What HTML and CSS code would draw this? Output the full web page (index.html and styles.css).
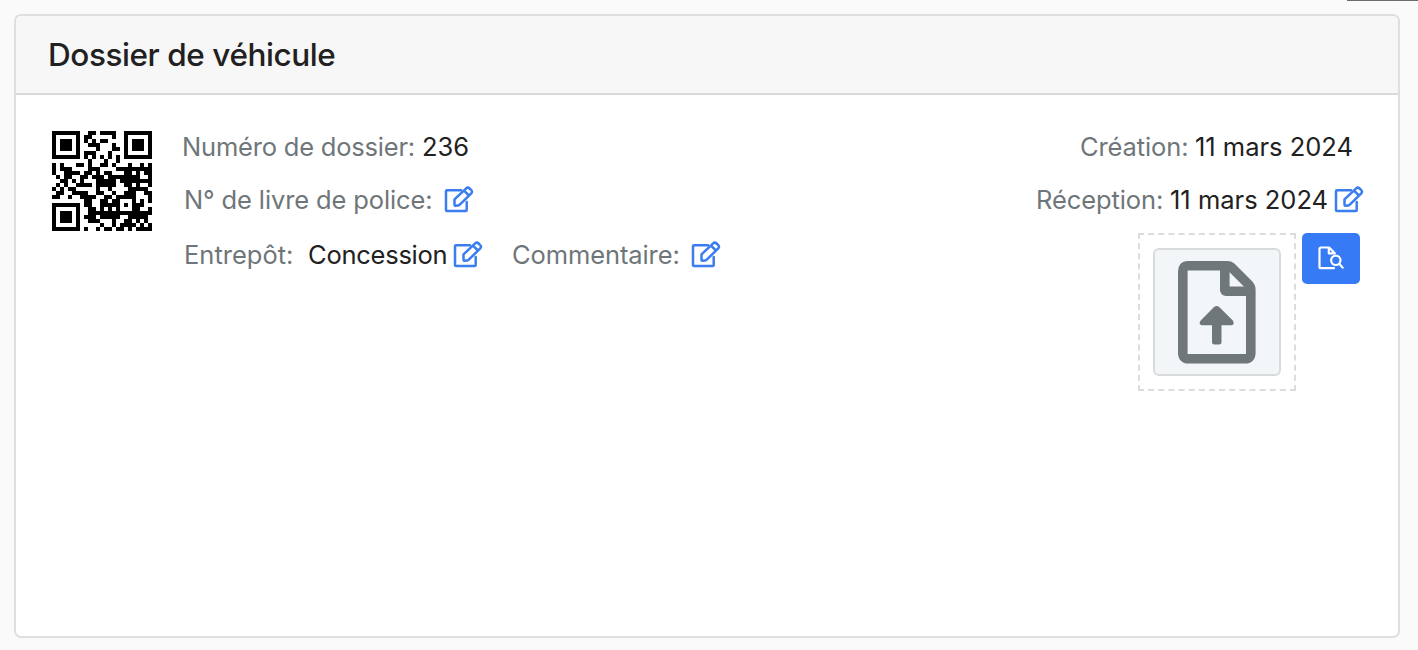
FILE: index.html
```html
<!DOCTYPE html>
<html lang="fr">
<head>
<meta charset="utf-8">
<title>Dossier de véhicule</title>
<link rel="stylesheet" href="styles.css">
</head>
<body>
<svg class="defs" aria-hidden="true">
  <symbol id="edit" viewBox="0 0 30 28">
    <g fill="none" stroke="currentColor" stroke-width="2.5" stroke-linejoin="round" stroke-linecap="round">
      <path d="M17 4.2H3Q2 4.2 2 5.2V24Q2 25 3 25H21.7Q22.7 25 22.7 24V16"/>
      <path d="M10.5 17.8V13.4L22.2 2.3Q23.8.8 25.6 2.5L27 3.9Q28.9 5.7 27.3 7.3L15.8 18.7Q15.1 19.4 14.2 19.5L11.2 19.8Q10.5 19.8 10.5 17.8Z M20.3 4.9L24.9 9.5"/>
    </g>
  </symbol>
</svg>
<div class="edge"></div>
<main class="card">
  <header class="card-header"><h1>Dossier de véhicule</h1></header>
  <div class="card-body">
    <svg class="qr" id="qr" viewBox="0 0 25 25"></svg>
    <section class="info">
      <p class="line first"><span class="label l-num">Numéro de dossier:</span><span class="value">236</span></p>
      <p class="line second"><span class="label l-police">N° de livre de police:</span><svg class="edit"><use href="#edit"/></svg></p>
      <p class="line third"><span class="label l-depot">Entrepôt:</span><span class="value v-depot">Concession</span><svg class="edit"><use href="#edit"/></svg><span class="label l-comment">Commentaire:</span><svg class="edit"><use href="#edit"/></svg></p>
    </section>
    <section class="dates">
      <p class="line first created"><span class="label l-created">Création:</span><span class="value">11 mars 2024</span></p>
      <p class="line second"><span class="label l-received">Réception:</span><span class="value v-received">11 mars 2024</span><svg class="edit"><use href="#edit"/></svg></p>
      <div class="files">
        <div class="drop"><div class="thumb">
          <svg class="upload" viewBox="0 0 78 103">
            <path fill="none" stroke="currentColor" stroke-width="9.6" stroke-linejoin="round" d="M9.8 4.8H49Q52 4.8 54 6.8L70.5 23.3Q72.8 25.6 72.8 28.5V92Q72.8 97.8 67 97.8H10.6Q4.8 97.8 4.8 92V10.6Q4.8 4.8 9.8 4.8Z"/>
            <path fill="none" stroke="currentColor" stroke-width="9.6" d="M46.8 5V29Q46.8 30.3 48.1 30.3H73"/>
            <path fill="currentColor" d="M36 46Q38.6 43.8 41.2 46L54.8 59.5Q57.2 63.5 53.5 64.2H43.5V81Q43.5 83.5 41 83.5H36.5Q34 83.5 34 81V64.2H24Q20 63.5 22.7 59.5Z"/>
          </svg>
        </div></div>
        <button class="preview" aria-label="Aperçu">
          <svg viewBox="0 0 26 25" fill="none" stroke="currentColor" stroke-width="2.2" stroke-linejoin="round" stroke-linecap="round">
            <path d="M16 22.2H3Q1.5 22.2 1.5 20.7V3Q1.5 1.5 3 1.5H11.2L16.8 7.2M10.8 2V7.4H16.5"/>
            <circle cx="17.8" cy="14.3" r="4.7"/><path d="M21.3 17.8L24.6 21.6"/>
          </svg>
        </button>
      </div>
    </section>
  </div>
</main>
<script src="qr.js"></script>
</body>
</html>
```
FILE: qr.js
```js
const rows = [
  "1111111001101111001111111",
  "1000001011000001001000001",
  "1011101010101100001011101",
  "1011101001110001001011101",
  "1011101000010001101011101",
  "1000001011100010001000001",
  "1111111010101010101111111",
  "0000000001000100100000000",
  "1010001101001101000100101",
  "1011100001110000111111111",
  "1001111011010110001101011",
  "0101100110111011111111001",
  "0011010100011111011111111",
  "0101001111011111001101001",
  "1010110000010010000111110",
  "0110011110011001001110011",
  "1100100111100110111110001",
  "0000000011001101100010101",
  "1111111011001111101011100",
  "1000001001101010100011001",
  "1011101001111111111111111",
  "1011101011101111100111110",
  "1011101001110001001101010",
  "1000001000001001011110101",
  "1111111010010110110101111"
];
// One path for every dark module keeps the code compact.
const path = document.createElementNS("http://www.w3.org/2000/svg", "path");
path.setAttribute("d", rows.map((row, y) => [...row].map((cell, x) =>
  cell === "1" ? `M${x} ${y}h1v1h-1z` : "").join("")).join(""));
document.getElementById("qr").append(path);
```
FILE: styles.css
```css
* { box-sizing: border-box; }
body { margin: 0; height: 650px; padding: 14px 18px 12px 14px; background: #fafafa; font-family: Inter, "Liberation Sans", sans-serif; color: #212529; overflow: hidden; }
.defs { position: absolute; width: 0; height: 0; }
.edge { position: absolute; top: 0; right: 0; width: 71px; height: 1px; background: #6b6b6b; }
.card { height: 624px; border: 2px solid #dfdfdf; border-radius: 7px; background: #fff; overflow: hidden; }
.card-header { height: 79px; padding: 0 32px; background: #f7f7f7; border-bottom: 2px solid #dadada; display: flex; align-items: center; }
h1 { margin: 0; font-size: 31.5px; line-height: 40px; font-weight: 550; letter-spacing: -.43px; color: #212121; }
.card-body { display: flex; align-items: flex-start; padding: 36px 34px 0 36px; }
.qr { width: 100px; height: 100px; margin-right: 1px; flex: none; }
.info { margin-left: 29px; flex: 1; }
.line { margin: 0; display: flex; align-items: center; white-space: nowrap; font-size: 25.5px; line-height: 32px; }
.first { height: 32px; }
.second { height: 32px; margin-top: 21px; }
.third { height: 32px; margin-top: 23px; }
.label { color: #6f7679; flex: none; }
.value { color: #212121; flex: none; }
.info .second, .info .third { padding-left: 2px; }
.l-num { width: 240px; letter-spacing: -.2px; }
.l-police { width: 260px; letter-spacing: -.13px; }
.l-depot { width: 124px; }
.v-depot { width: 145px; letter-spacing: -.25px; }
.l-comment { width: 179px; margin-left: 29px; letter-spacing: -.1px; }
.edit { width: 30px; height: 28px; color: #3b7df0; flex: none; }
.dates { width: 330px; display: flex; flex-direction: column; align-items: flex-end; }
.created { padding-right: 11px; }
.l-created { width: 115px; letter-spacing: -.1px; }
.l-received { width: 134px; letter-spacing: -.1px; }
.v-received { width: 164px; }
.files { display: flex; align-items: flex-start; gap: 6px; margin: 17px 4px 0 0; }
.drop { width: 158px; height: 158px; padding: 13px; border: 2px dashed #dcdcdc; }
.thumb { width: 128px; height: 128px; border: 2px solid #d8dbdc; border-radius: 6px; background: #f3f6f8; display: flex; align-items: center; justify-content: center; }
.upload { width: 78px; height: 103px; color: #6f777b; }
.preview { width: 58px; height: 51px; border: 0; padding: 0; border-radius: 5px; background: #367af6; color: #fff; display: flex; align-items: center; justify-content: center; }
.preview svg { width: 26px; height: 25px; }
```
